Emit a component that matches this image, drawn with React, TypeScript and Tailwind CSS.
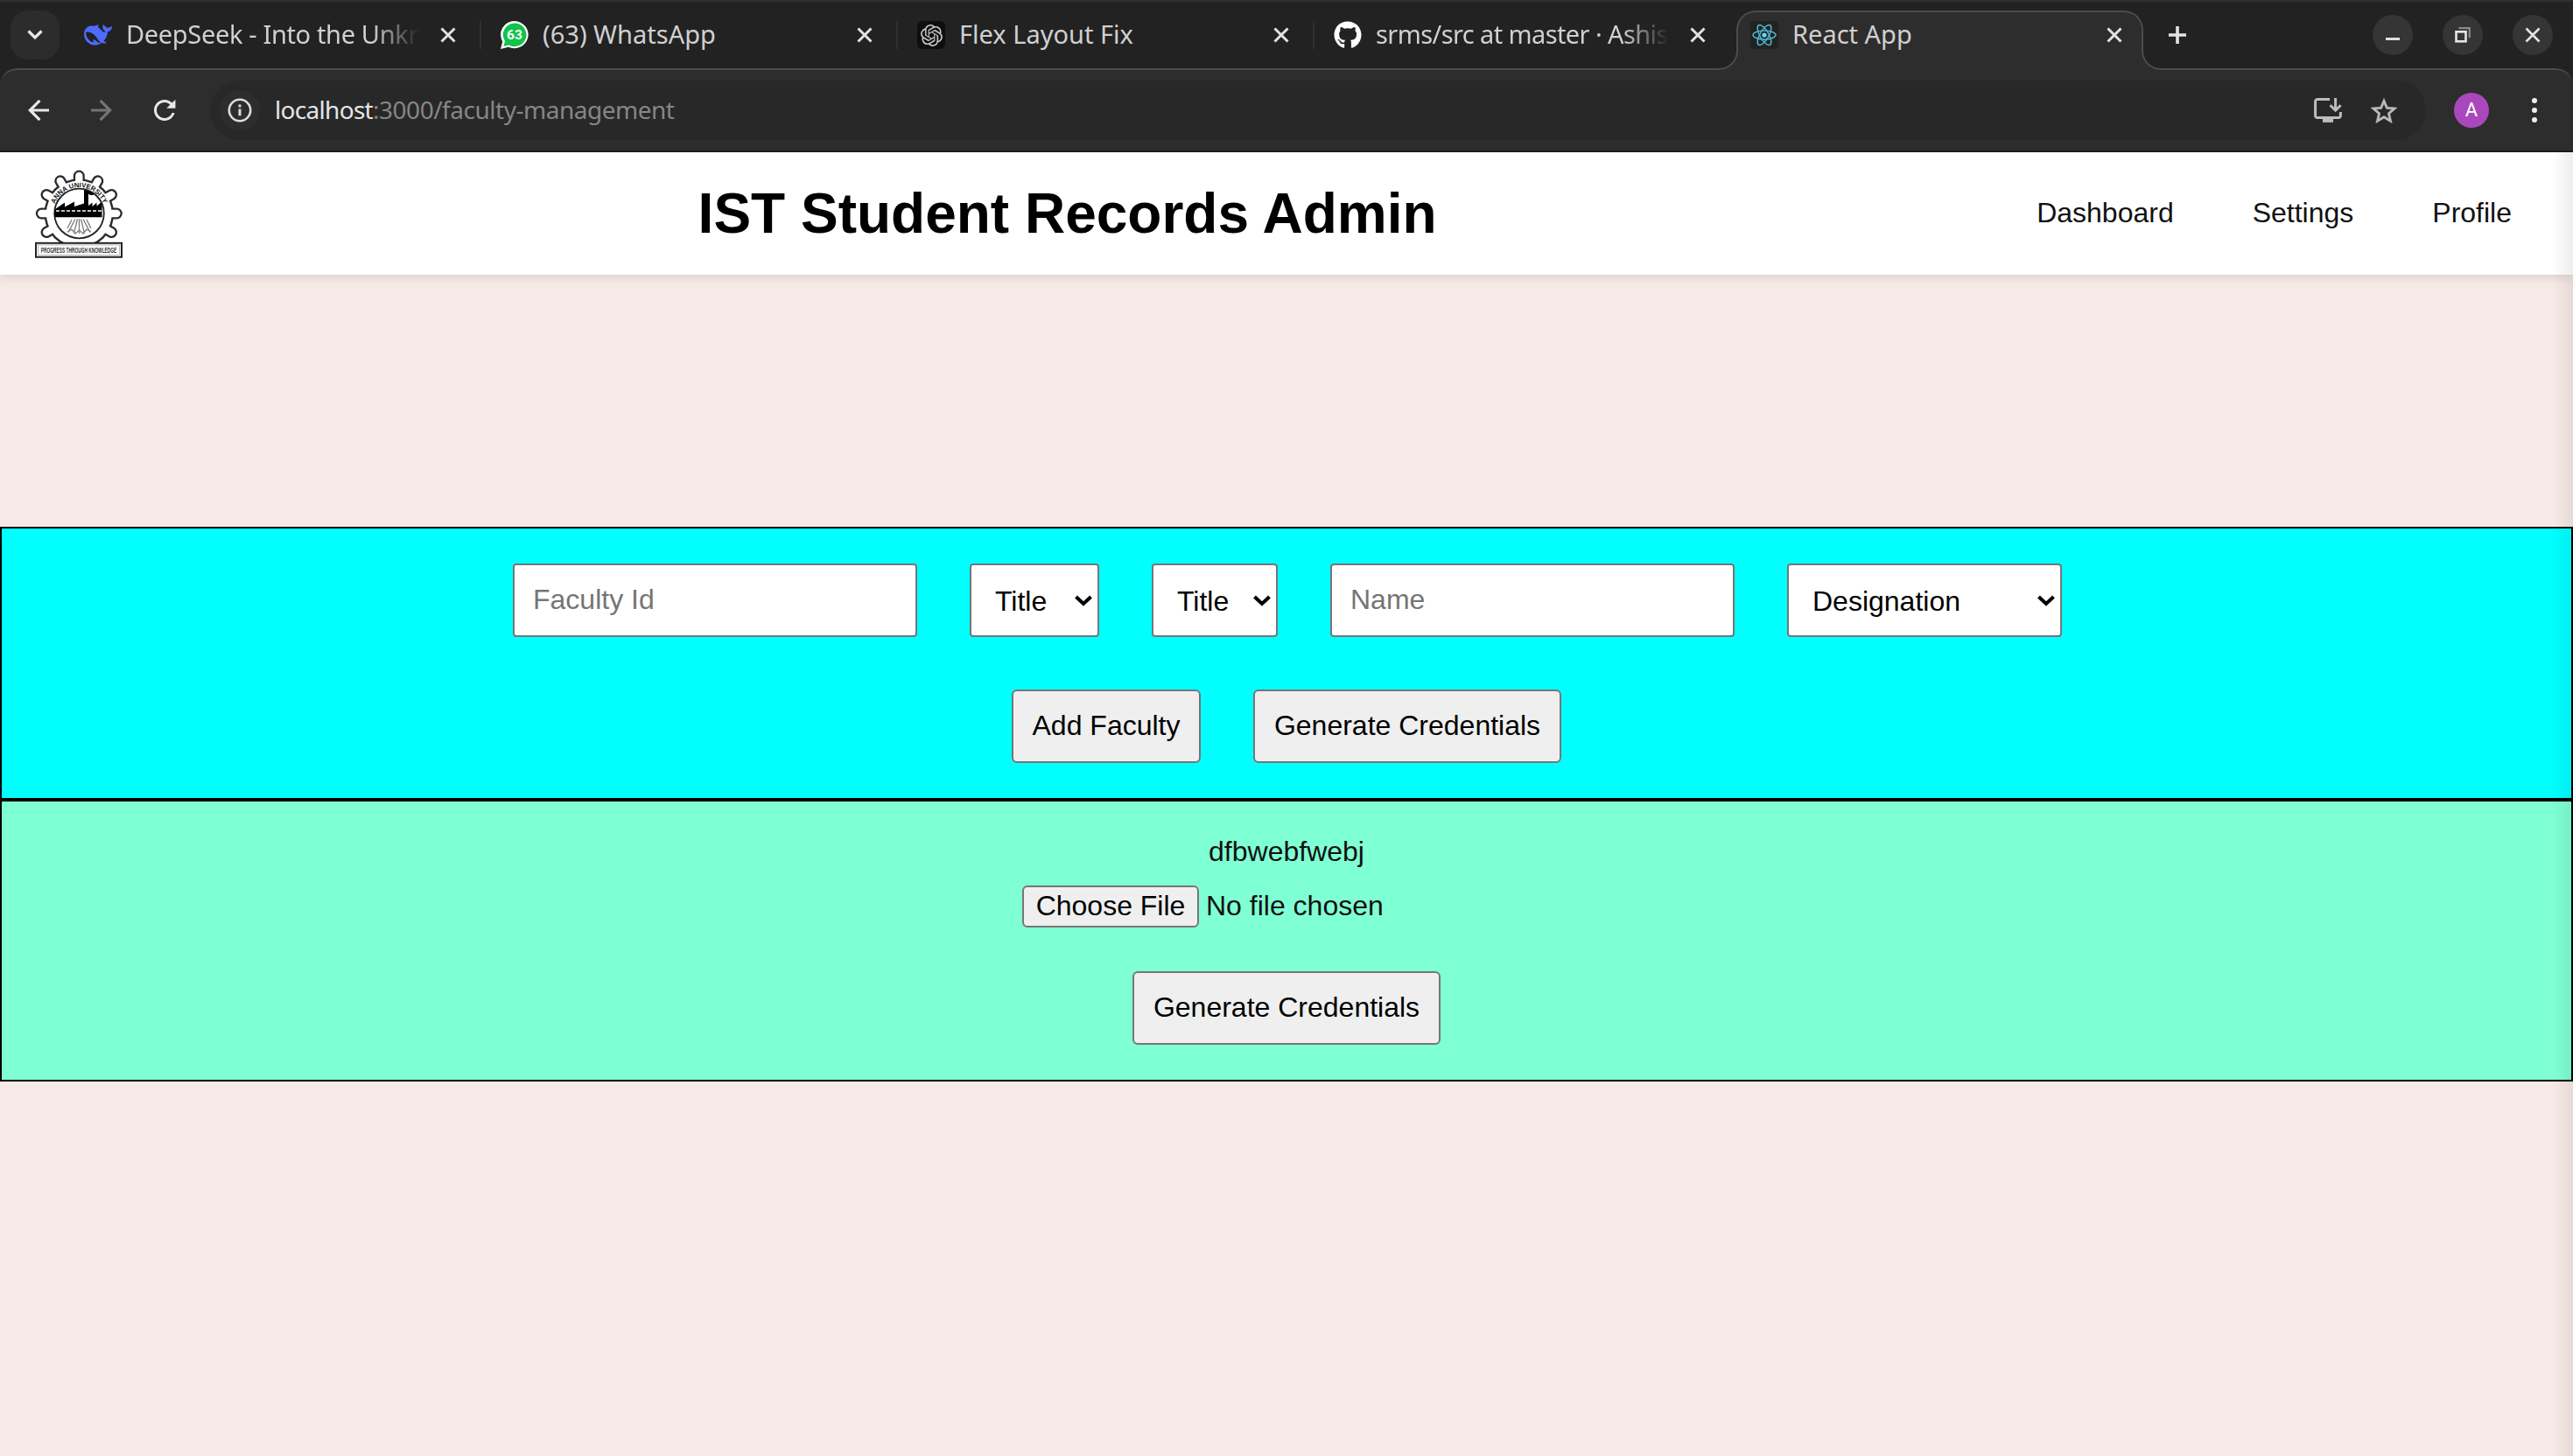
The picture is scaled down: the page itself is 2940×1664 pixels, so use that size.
import React from "react";
import { SiOpenai } from "react-icons/si";
import { FaGithub } from "react-icons/fa";

const uiFont = "font-['Noto_Sans','Open_Sans',sans-serif]";

function DeepSeekIcon() {
  return (
    <svg viewBox="0 0 24 24" className="h-8 w-8 fill-[#4d6bfe]">
      <path d="M23.748 4.482c-.254-.124-.364.113-.512.234-.051.039-.094.09-.137.136-.372.397-.806.657-1.373.626-.829-.046-1.537.214-2.163.848-.133-.782-.575-1.248-1.247-1.548-.352-.156-.708-.311-.955-.65-.172-.241-.219-.51-.305-.774-.055-.16-.11-.323-.293-.35-.2-.031-.278.136-.356.276-.313.572-.434 1.202-.422 1.84.027 1.436.633 2.58 1.838 3.393.137.093.172.187.129.323-.082.28-.18.552-.266.833-.055.179-.137.217-.329.14a5.526 5.526 0 01-1.736-1.18c-.857-.828-1.631-1.742-2.597-2.458a11.365 11.365 0 00-.689-.471c-.985-.957.13-1.743.388-1.836.27-.098.093-.432-.779-.428-.872.004-1.67.295-2.687.684a3.055 3.055 0 01-.465.137 9.597 9.597 0 00-2.883-.102c-1.885.21-3.39 1.102-4.497 2.623C.082 8.606-.231 10.684.152 12.85c.403 2.284 1.569 4.175 3.36 5.653 1.858 1.533 3.997 2.284 6.438 2.14 1.482-.085 3.133-.284 4.994-1.86.47.234.962.327 1.78.397.63.059 1.236-.03 1.705-.128.735-.156.684-.837.419-.961-2.155-1.004-1.682-.595-2.113-.926 1.096-1.296 2.746-2.642 3.392-7.003.05-.347.007-.565 0-.845-.004-.17.035-.237.23-.256a4.173 4.173 0 001.545-.475c1.396-.763 1.96-2.015 2.093-3.517.02-.23-.004-.467-.247-.588zM11.581 18c-2.089-1.642-3.102-2.183-3.52-2.16-.392.024-.321.471-.235.763.09.288.207.486.371.739.114.167.192.416-.113.603-.673.416-1.842-.14-1.897-.167-1.361-.802-2.5-1.86-3.301-3.307-.774-1.393-1.224-2.887-1.298-4.482-.02-.386.093-.522.477-.592a4.696 4.696 0 011.529-.039c2.132.312 3.946 1.265 5.468 2.774.868.86 1.525 1.887 2.202 2.891.72 1.066 1.494 2.082 2.48 2.914.348.292.625.514.891.677-.802.09-2.14.11-3.054-.614z" />
    </svg>
  );
}

function WhatsAppIcon() {
  return (
    <svg viewBox="0 0 32 32" className="h-8 w-8">
      <path d="M16 0a16 15.6 0 1 1-7 29.8L0 32l2.2-8.6A16 15.6 0 0 1 16 0z" fill="#fff" />
      <path d="M16 2.4a13.6 13.4 0 1 1-6.6 25.2L3.4 29l1.6-6A13.6 13.4 0 0 1 16 2.4z" fill="#12c24a" />
      <text x="16" y="21.4" textAnchor="middle" fontSize="15.5" fontWeight="700" fill="#fff" fontFamily="Roboto, sans-serif">
        63
      </text>
    </svg>
  );
}

function ChatIcon() {
  return (
    <span className="flex h-8 w-8 items-center justify-center rounded-[6px] bg-[#0e0e0e]">
      <SiOpenai className="h-[25px] w-[25px] text-[#c4c4c4]" />
    </span>
  );
}

function ReactIcon() {
  return (
    <span className="flex h-8 w-8 items-center justify-center rounded-[4px] bg-[#222222]">
      <svg viewBox="-14 -14 28 28" className="h-7 w-7" fill="none" stroke="#4fb4cf" strokeWidth="1.5">
        <ellipse rx="13" ry="5" />
        <ellipse rx="13" ry="5" transform="rotate(60)" />
        <ellipse rx="13" ry="5" transform="rotate(120)" />
        <circle r="2.6" fill="#61dafb" stroke="none" />
      </svg>
    </span>
  );
}

function Cross({ thin = false }: { thin?: boolean }) {
  return (
    <svg viewBox="0 0 18 18" className="h-[18px] w-[18px] shrink-0" fill="none" stroke="#e3e3e3" strokeWidth={thin ? 2.6 : 3}>
      <path d="M1.5 1.5l15 15M16.5 1.5l-15 15" />
    </svg>
  );
}

type TabProps = { icon: React.ReactNode; title: string; faded?: boolean; tight?: string; separator?: boolean };

function Tab({ icon, title, faded, tight = "", separator = true }: TabProps) {
  return (
    <div className="flex h-full w-[476px] items-center pr-[29px] pl-[22px]">
      {icon}
      <span
        className={`ml-4 w-[335px] overflow-hidden pb-[2px] text-[29px] leading-[40px] whitespace-nowrap text-[#d0d0d0] ${tight} ${
          faded ? "[mask-image:linear-gradient(to_right,#000_84%,transparent_100%)]" : ""
        }`}
      >
        {title}
      </span>
      <span className="ml-auto flex">
        <Cross />
      </span>
      {separator && <span className="-mr-[29px] ml-[27px] h-8 w-[2px] shrink-0 bg-[#303030]" />}
    </div>
  );
}

function WindowButton({ children }: { children: React.ReactNode }) {
  return <button className="flex h-[46px] w-[46px] items-center justify-center rounded-full bg-[#353535]">{children}</button>;
}

function TabStrip() {
  return (
    <div className="flex h-[78px] items-center border-t-2 border-[#303030] bg-[#222222] pl-3">
      <button className="flex h-14 w-14 items-center justify-center rounded-[20px] bg-[#2c2c2c]">
        <svg viewBox="0 0 18 12" className="h-3 w-[18px]" fill="none" stroke="#e8e8e8" strokeWidth="3.2">
          <path d="M1.5 1.5L9 9l7.5-7.5" />
        </svg>
      </button>
      <div className="ml-[6px] flex h-full items-center">
        <Tab icon={<DeepSeekIcon />} title="DeepSeek - Into the Unkr" faded tight="tracking-[-0.35px]" />
        <Tab icon={<WhatsAppIcon />} title="(63) WhatsApp" />
        <Tab icon={<ChatIcon />} title="Flex Layout Fix" />
        <Tab icon={<FaGithub className="h-8 w-8 shrink-0 text-white" />} title="srms/src at master · Ashis" faded tight="tracking-[-0.6px]" separator={false} />
      </div>
      <div className="relative z-10 mt-[10px] -mb-1 ml-[6px] flex h-[68px] w-[465px] items-center self-start rounded-t-[22px] border-2 border-b-0 border-[#4c4c4c] bg-[#2d2d2d] pr-[22px] pb-[14px] pl-[14px]">
        <ReactIcon />
        <span className="ml-4 pb-[2px] text-[29px] leading-[40px] whitespace-nowrap text-[#d0d0d0]">React App</span>
        <span className="ml-auto flex">
          <Cross />
        </span>
        <span className="absolute bottom-0 -left-[24px] h-6 w-6 bg-[#2d2d2d]">
          <span className="block h-6 w-6 rounded-br-[22px] border-r-2 border-b-2 border-[#4c4c4c] bg-[#222222]" />
        </span>
        <span className="absolute -right-[24px] bottom-0 h-6 w-6 bg-[#2d2d2d]">
          <span className="block h-6 w-6 rounded-bl-[22px] border-b-2 border-l-2 border-[#4c4c4c] bg-[#222222]" />
        </span>
      </div>
      <svg viewBox="0 0 20 20" className="ml-[29px] h-5 w-5" stroke="#e3e3e3" strokeWidth="3.6">
        <path d="M10 0v20M0 10h20" />
      </svg>
      <div className="mr-[23px] ml-auto flex gap-[34px]">
        <WindowButton>
          <span className="mt-[9px] h-[3px] w-4 bg-[#e0e0e0]" />
        </WindowButton>
        <WindowButton>
          <svg viewBox="0 0 18 18" className="h-[18px] w-[18px]" fill="none">
            <path d="M4.5 1.2h12.3v11" stroke="#8a8a8a" strokeWidth="2.2" />
            <rect x="1.5" y="5.3" width="11" height="11" stroke="#e6e6e6" strokeWidth="2.6" />
          </svg>
        </WindowButton>
        <WindowButton>
          <Cross thin />
        </WindowButton>
      </div>
    </div>
  );
}

function Toolbar() {
  return (
    <div className="bg-[#222222]">
      <div className="flex h-24 items-center rounded-t-[20px] border-t-2 border-b-2 border-t-[#4c4c4c] border-b-[#1c1c1c] bg-[#2d2d2d] pl-8">
        <svg viewBox="0 0 24 24" className="h-6 w-6" fill="none" stroke="#e8e8e8" strokeWidth="3.2">
          <path d="M24 12H2M13.4 .9L2.3 12l11.1 11.1" />
        </svg>
        <svg viewBox="0 0 24 24" className="ml-12 h-6 w-6" fill="none" stroke="#747474" strokeWidth="3.2">
          <path d="M0 12h22M10.6 .9L21.7 12l-11.1 11.1" />
        </svg>
        <svg viewBox="0 0 24 24" className="ml-[42px] h-9 w-9 fill-[#e8e8e8]">
          <path d="M17.65 6.35C16.2 4.9 14.21 4 12 4c-4.42 0-7.99 3.58-7.99 8s3.57 8 7.99 8c3.73 0 6.84-2.55 7.73-6h-2.08c-.82 2.33-3.04 4-5.65 4-3.31 0-6-2.69-6-6s2.69-6 6-6c1.66 0 3.14.69 4.22 1.78L13.5 10.5H20.3V4l-2.65 2.35z" />
        </svg>
        <div className="ml-[34px] flex h-[68px] w-[2532px] items-center rounded-full bg-[#282828] pl-[11px]">
          <span className="flex h-[46px] w-[46px] shrink-0 items-center justify-center rounded-full bg-[#2d2d2d]">
            <svg viewBox="0 0 28 28" className="h-7 w-7" fill="none" stroke="#dcdcdc">
              <circle cx="14" cy="14" r="12.2" strokeWidth="2.6" />
              <path d="M14 12.4v7.8M14 7.6v2.8" strokeWidth="3" />
            </svg>
          </span>
          <span className="ml-[17px] pb-[2px] text-[28px] leading-[40px] whitespace-nowrap text-[#868686]">
            <span className="tracking-[-0.7px] text-[#e6e6e6]">localhost</span>
            <span className="tracking-[-0.48px]">:3000/faculty-management</span>
          </span>
          <svg viewBox="0 0 32 28" className="ml-auto h-7 w-8 shrink-0" fill="none" stroke="#bdbdbd" strokeWidth="3">
            <path d="M18 1.6H4A2.4 2.4 0 0 0 1.6 4v16.2A2.4 2.4 0 0 0 4 22.6h24a2.4 2.4 0 0 0 2.4-2.4V16" />
            <path d="M24.6 0v13M18.6 8.2l6 6 6-6" />
            <path d="M10 25.6h12" strokeWidth="4.6" />
          </svg>
          <svg viewBox="2 2 20 19" className="mr-[33px] ml-[33px] h-[29px] w-[30px] shrink-0 fill-[#bdbdbd] stroke-[#bdbdbd]" strokeWidth="0.3">
            <path d="M22 9.24l-7.19-.62L12 2 9.19 8.63 2 9.24l5.46 4.73L5.82 21 12 17.27 18.18 21l-1.63-7.03L22 9.24zM12 15.4l-3.76 2.27 1-4.28-3.32-2.88 4.38-.38L12 6.1l1.71 4.04 4.38.38-3.32 2.88 1 4.28L12 15.4z" />
          </svg>
        </div>
        <span className="ml-8 flex h-10 w-10 items-center justify-center rounded-full bg-[#ab47bc] font-['Roboto',sans-serif] text-[22px] leading-none text-white">A</span>
        <span className="ml-[49px] flex flex-col gap-[5px]">
          <span className="h-[6px] w-[6px] rounded-full bg-[#f0f0f0]" />
          <span className="h-[6px] w-[6px] rounded-full bg-[#f0f0f0]" />
          <span className="h-[6px] w-[6px] rounded-full bg-[#f0f0f0]" />
        </span>
      </div>
    </div>
  );
}

const teeth = [-120, -90, -60, -30, 0, 30, 60, 90, 120];

function Gear({ color, radius, width, tip }: { color: string; radius: number; width: number; tip: number }) {
  return (
    <g stroke={color} strokeWidth={width} strokeLinecap="round">
      <circle cx="50.3" cy="51" r={radius} fill={color} stroke="none" />
      {teeth.map((a) => (
        <line key={a} x1="50.3" y1="51" x2="50.3" y2={51 - tip} transform={`rotate(${a} 50.3 51)`} />
      ))}
    </g>
  );
}

function UniversityLogo() {
  return (
    <svg viewBox="0 0 100 102" className="h-[102px] w-[100px]">
      <defs>
        <path id="crestArc" d="M20.5 51a29.9 29.9 0 0 1 59.8 0" />
        <clipPath id="crestDisc">
          <circle cx="50.5" cy="51" r="28" />
        </clipPath>
      </defs>
      <Gear color="#2a2a2a" radius={39.8} width={13} tip={43} />
      <Gear color="#fff" radius={37.4} width={8.4} tip={43} />
      <circle cx="50.5" cy="51" r="28.3" fill="#fff" stroke="#222" strokeWidth="1.8" />
      <g clipPath="url(#crestDisc)">
        <path d="M20 48l3-2 11-7.5v5l11-6v5.5l11-3.500V23.600h5V42l4.500-3.500v4.500l5-4.500v4l6-5V55.300H20z" fill="#000" />
        <path d="M60 25c4-4 8 0 12-2 3 2 5 4 8 5-5 2-9-1-12 1s-5 1-8-1z" fill="#000" />
        <path d="M24 48h54" stroke="#fff" strokeWidth="1.6" strokeDasharray="4 2" />
        <g fill="none" stroke="#7c7c7c" strokeWidth="1.3">
          <path d="M46 57.500l-8 15M55 57.500l8 15M48.500 57.500l-4 16M52.500 57.500l4 16M50.500 57v17M42 58l-5 10M59 58l5 10" />
          <path d="M37 72l5-3 4 5 4.500-4 4.500 4 4-5 5 3" />
        </g>
      </g>
      <text fontSize="7.8" fontWeight="700" fill="#111" fontFamily="Liberation Sans, sans-serif">
        <textPath href="#crestArc" startOffset="50%" textAnchor="middle">
          ANNA UNIVERSITY
        </textPath>
      </text>
      <rect x="1" y="84.8" width="98" height="16" fill="#fff" stroke="#222" strokeWidth="2" />
      <rect x="3.4" y="87" width="93.200" height="11.600" fill="none" stroke="#999" strokeWidth=".7" />
      <text transform="translate(50 96.300) scale(1 2)" textAnchor="middle" fontSize="4.850" fontWeight="700" fill="#333" fontFamily="Liberation Sans, sans-serif">
        PROGRESS THROUGH KNOWLEDGE
      </text>
    </svg>
  );
}

function PageHeader() {
  return (
    <header className="relative flex h-[140px] items-center justify-between bg-white pr-[70px] pl-10 shadow-[0_4px_10px_rgba(0,0,0,0.1)]">
      <UniversityLogo />
      <h1 className="mr-7 text-[64px] leading-[72px] font-bold text-black">IST Student Records Admin</h1>
      <nav className="flex gap-[90px] pb-[2px] text-[32px] leading-[36px] text-[#111]">
        <a>Dashboard</a>
        <a>Settings</a>
        <a>Profile</a>
      </nav>
    </header>
  );
}

function TextField({ placeholder }: { placeholder: string }) {
  return (
    <input
      placeholder={placeholder}
      className="h-[84px] w-[462px] rounded-[4px] border-2 border-[#767676] bg-white px-[21px] pb-[2px] text-[32px] leading-[36px] placeholder:text-[#757575]"
    />
  );
}

function SelectBox({ label, width }: { label: string; width: string }) {
  return (
    <button className={`flex h-[84px] items-center justify-between rounded-[4px] border-2 border-[#767676] bg-white pt-[1px] pr-[6px] pl-[27px] ${width}`}>
      <span className="text-[32px] leading-[36px] text-black">{label}</span>
      <svg viewBox="0 0 20 13" className="h-[13px] w-5" fill="none" stroke="#000" strokeWidth="4">
        <path d="M1.5 2L10 10l8.5-8" />
      </svg>
    </button>
  );
}

function ActionButton({ label, width }: { label: string; width: string }) {
  return (
    <button className={`h-[84px] rounded-[6px] border-2 border-[#767676] bg-[#efefef] pb-[2px] text-center text-[32px] leading-[36px] whitespace-nowrap text-black ${width}`}>
      {label}
    </button>
  );
}

function FacultyForm() {
  return (
    <section className="flex flex-col gap-[60px] border-2 border-black bg-[#00ffff] py-10">
      <div className="flex justify-center gap-[60px] pl-[2px]">
        <TextField placeholder="Faculty Id" />
        <SelectBox label="Title" width="w-[148px]" />
        <SelectBox label="Title" width="w-[144px]" />
        <TextField placeholder="Name" />
        <SelectBox label="Designation" width="w-[314px]" />
      </div>
      <div className="flex justify-center gap-[60px]">
        <ActionButton label="Add Faculty" width="w-[216px]" />
        <ActionButton label="Generate Credentials" width="w-[352px]" />
      </div>
    </section>
  );
}

function UploadForm() {
  return (
    <section className="flex flex-col items-center border-2 border-black bg-[#7fffd4] pt-[38px] pb-10">
      <p className="text-[32px] leading-[38px] text-[#111]">dfbwebfwebj</p>
      <div className="mt-5 flex w-[604px] items-center">
        <button className="h-12 w-[202px] rounded-[6px] border-2 border-[#767676] bg-[#efefef] pb-[2px] text-[32px] leading-[36px] whitespace-nowrap text-black">Choose File</button>
        <span className="ml-2 pb-[2px] text-[32px] leading-[36px] text-[#111]">No file chosen</span>
      </div>
      <div className="mt-[50px] flex">
        <ActionButton label="Generate Credentials" width="w-[352px]" />
      </div>
    </section>
  );
}

export default function App() {
  return (
    <div className="flex h-[1664px] w-[2940px] flex-col overflow-hidden bg-[#f7eae6]">
      <div className={uiFont}>
        <TabStrip />
        <Toolbar />
      </div>
      <div className="relative flex-1 font-['Liberation_Sans',Arial,sans-serif]">
        <PageHeader />
        <main className="pt-[288px]">
          <FacultyForm />
          <UploadForm />
        </main>
        <div className="absolute top-0 right-0 bottom-0 w-6 bg-linear-to-r from-transparent to-black/7" />
      </div>
    </div>
  );
}
